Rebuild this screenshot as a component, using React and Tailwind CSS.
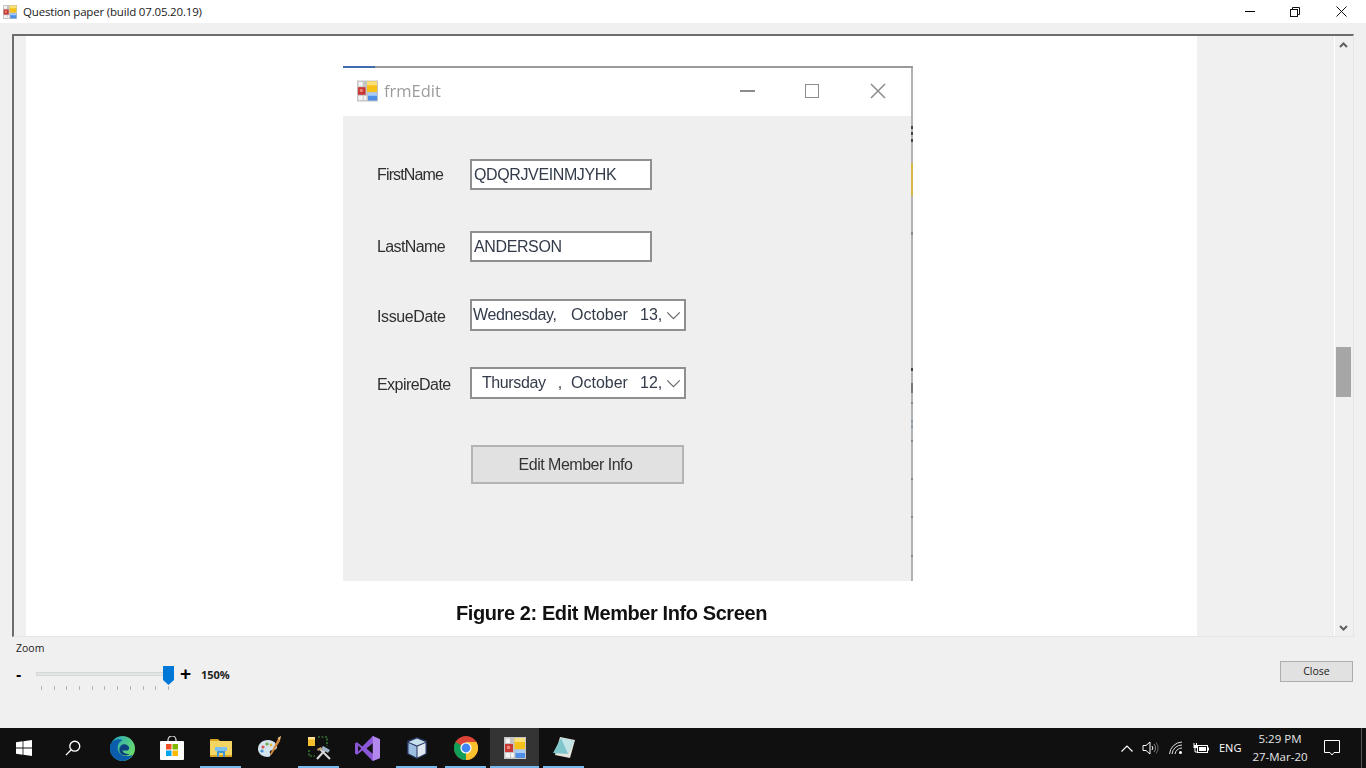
const AppIcon = ({ className }) => (
  <svg viewBox="0 0 22 22" className={className}>
    <rect x="0" y="0" width="22" height="22" fill="#c4c4c4" />
    <rect x="1.5" y="1.5" width="4.5" height="4.5" fill="#f4f4f4" />
    <rect x="1.5" y="16" width="4.5" height="4.5" fill="#f4f4f4" />
    <rect x="7" y="16" width="3" height="4.5" fill="#f4f4f4" />
    <rect x="1" y="7" width="8" height="8" fill="#c93a36" />
    <rect x="3" y="9" width="3" height="3" fill="#f08a7c" />
    <rect x="10.5" y="1" width="10.5" height="11" fill="#f6c21a" />
    <rect x="10.5" y="1" width="10.5" height="4" fill="#fbe07a" />
    <rect x="11.5" y="13" width="9.5" height="8" fill="#4f8fe8" />
    <rect x="11.5" y="13" width="9.5" height="3" fill="#a9cdf7" />
  </svg>
);

const Chevron = () => (
  <svg viewBox="0 0 16 10" className="w-[15px] h-[9px]" fill="none" stroke="#6a6a6a" strokeWidth="1.4">
    <path d="M1 1.5 L8 8.5 L15 1.5" />
  </svg>
);

const Row = ({ label, children, className, labelClass }) => (
  <div className={`flex items-center ${className}`}>
    <div className={`w-[93px] text-[16px] text-[#2f2f2f] ${labelClass}`}>{label}</div>
    {children}
  </div>
);

const TextBox = ({ value }) => (
  <div className="w-[182px] h-[31px] border-2 border-[#8f8f8f] bg-white pl-[2px] flex items-center text-[16px] tracking-[-0.38px] text-[#333b4a]">{value}</div>
);

const DateBox = ({ day, comma, num, pad }) => (
  <div className="w-[216px] h-[32px] border-2 border-[#8f8f8f] bg-white flex items-center text-[16px] text-[#333b4a]">
    <span className={`${pad} whitespace-pre w-[99px] tracking-[-0.4px]`}>{day}{comma}</span>
    <span className="w-[69px]">October</span>
    <span className="w-[24px]">{num},</span>
    <span className="ml-[2px]"><Chevron /></span>
  </div>
);

const EdgeMark = ({ y, h, c }) => (
  <div className="absolute right-0 w-[2px]" style={{ top: y, height: h, background: c }} />
);

const Edge = () => (
  <div className="flex flex-col w-[2px] bg-[#b2b2b2] relative">
    {[[58, 3, "#444"], [64, 3, "#444"], [71, 3, "#444"], [95, 33, "#d8b84a"], [164, 3, "#888"], [300, 3, "#444"], [315, 10, "#777"], [334, 2, "#888"], [352, 3, "#8a9aaa"], [357, 3, "#8a9aaa"], [372, 2, "#888"], [410, 2, "#888"], [448, 2, "#888"], [487, 2, "#888"]].map(([y, h, c], i) => (
      <EdgeMark key={i} y={y} h={h} c={c} />
    ))}
  </div>
);

const Form = () => (
  <div className="w-[570px] h-[515px] shrink-0 flex flex-col" >
    <div className="flex h-[2px] bg-[#9a9a9a]">
      <div className="w-[32px] bg-[#3f6cab]" />
    </div>
    <div className="flex flex-1">
      <div className="flex-1 flex flex-col blur-[0.55px]">
        <div className="h-[48px] bg-white flex items-center pl-[14px] pb-[2px]">
          <AppIcon className="w-[21px] h-[22px]" />
          <span className="ml-[6px] text-[16.5px] text-[#9c9c9c] font-['Open_Sans',sans-serif]">frmEdit</span>
          <div className="flex-1" />
          <div className="w-[15px] h-[2px] bg-[#8c8c8c] mr-[50px]" />
          <div className="w-[14px] h-[14px] border-[1.5px] border-[#8c8c8c] mr-[51px]" />
          <svg viewBox="0 0 16 16" className="w-[16px] h-[16px] mr-[25px]" stroke="#8c8c8c" strokeWidth="1.5"><path d="M1 1 L15 15 M15 1 L1 15" /></svg>
        </div>
        <div className="flex-1 bg-[#efefef] pl-[34px] pt-[43px] font-['Liberation_Sans',sans-serif]">
          <Row label="FirstName" labelClass="tracking-[-0.85px]"><TextBox value="QDQRJVEINMJYHK" /></Row>
          <Row label="LastName" className="mt-[41px]" labelClass="pt-[1px] tracking-[-0.6px]"><TextBox value="ANDERSON" /></Row>
          <Row label="IssueDate" className="mt-[37px]" labelClass="pt-[3px] tracking-[-0.4px]"><DateBox day="Wednesday" comma="," num="13" pad="pl-[1px]" /></Row>
          <Row label="ExpireDate" className="mt-[36px]" labelClass="pt-[3px] tracking-[-0.55px]"><DateBox day="Thursday" comma="   ," num="12" pad="pl-[10px]" /></Row>
          <div className="ml-[94px] mt-[46px] w-[213px] h-[39px] bg-[#e1e1e1] border-2 border-[#b4b4b4] flex items-center justify-center pr-[4px] text-[16px] tracking-[-0.5px] text-[#333]">Edit Member Info</div>
        </div>
      </div>
      <Edge />
    </div>
  </div>
);

const Start = () => (
  <svg viewBox="0 0 16 16" className="w-[16px] h-[16px] -ml-px" fill="#fff">
    <path d="M0 2.3 L6.6 1.3 V7.5 H0 Z M7.4 1.2 L16 0 V7.5 H7.4 Z M0 8.4 H6.6 V14.7 L0 13.7 Z M7.4 8.4 H16 V16 L7.4 14.8 Z" />
  </svg>
);
const Search = () => (
  <svg viewBox="0 0 18 18" className="w-[16px] h-[16px] -ml-[2px]" fill="none" stroke="#fff" strokeWidth="1.5">
    <circle cx="11" cy="7" r="5.6" /><path d="M7 11 L1 17" />
  </svg>
);
const Edge2 = () => (
  <svg viewBox="0 0 24 24" className="w-[25px] h-[25px]">
    <defs>
      <linearGradient id="eg" x1="0" y1="0" x2="1" y2="0.6"><stop offset="0" stopColor="#1ea5c9" /><stop offset="1" stopColor="#6bdb6a" /></linearGradient>
    </defs>
    <circle cx="12" cy="12" r="12" fill="url(#eg)" />
    <path d="M12 24 A12 12 0 0 1 1 7 C4 3 9 2.5 12 4 C7 6 6 12 9 16 C12 20 18 20 22 18 A12 12 0 0 1 12 24 Z" fill="#0b5cab" />
    <path d="M9 13 C9 9 13 7 16 8.5 C19 10 19 13 17 14 L12 14 C12 16 15 18 19 17 C16 20 9 19 9 13 Z" fill="#0e3f7e" />
  </svg>
);
const Store = () => (
  <svg viewBox="0 0 24 24" className="w-[24px] h-[24px]">
    <path d="M8 6 V4 A4 4 0 0 1 16 4 V6" fill="none" stroke="#ddd" strokeWidth="1.2" />
    <rect x="0" y="5" width="24" height="19" rx="1" fill="#fff" />
    <rect x="6" y="8" width="5.5" height="5.5" fill="#f25022" />
    <rect x="12.5" y="8" width="5.5" height="5.5" fill="#7fba00" />
    <rect x="6" y="14.5" width="5.5" height="5.5" fill="#00a4ef" />
    <rect x="12.5" y="14.5" width="5.5" height="5.5" fill="#ffb900" />
  </svg>
);
const Folder = () => (
  <svg viewBox="0 0 22 20" className="w-[22px] h-[20px]">
    <path d="M0 2 A1 1 0 0 1 1 1 H8 L10 3 H0 Z" fill="#d9a520" />
    <rect x="0" y="3" width="22" height="16" fill="#f4d463" />
    <rect x="0" y="17" width="22" height="2" fill="#d9a520" />
    <path d="M7 19 V13 A1 1 0 0 1 8 12 H14 A1 1 0 0 1 15 13 V19 H13 V15 H9 V19 Z" fill="#3f95d6" />
    <rect x="5" y="9" width="12" height="4" fill="#7cc0ee" />
  </svg>
);
const Palette = () => (
  <svg viewBox="0 0 24 24" className="w-[24px] h-[24px]">
    <path d="M10 4 C4 4 0 8 0 13 C0 18 5 21 10 21 C13 21 13 18 12 17 C11 15 13 14 15 14 C19 14 20 11 18 8 C16 5 13 4 10 4 Z" fill="#d4e4ee" />
    <circle cx="5" cy="11" r="1.6" fill="#d9534f" /><circle cx="9" cy="8" r="1.6" fill="#6bb04a" /><circle cx="13" cy="9" r="1.4" fill="#e3b53a" /><circle cx="4" cy="15" r="1.6" fill="#4b8fd6" />
    <path d="M23 0 L20 3 L12 18 L13.5 19 L22 5 Z" fill="#d18a3c" /><path d="M23 0 L19.5 2 L21.5 4 Z" fill="#e8c98f" />
  </svg>
);
const Tools = () => (
  <svg viewBox="0 0 24 24" className="w-[24px] h-[24px]">
    <path d="M11 1 H20 V10 M2 14 V20 H8" fill="none" stroke="#3f9a3f" strokeWidth="1.2" strokeDasharray="2 1.5" />
    <rect x="1" y="1" width="7" height="9" fill="#f5bd2a" /><rect x="1" y="1" width="7" height="2.5" fill="#fce28a" />
    <path d="M10 23 L19 13 M13 13 L23 23" stroke="#d9d9d9" strokeWidth="2" />
    <path d="M16 10 L23 14 L21 17 L14 13 Z" fill="#9fb4c6" /><path d="M10 13 L14 11 L15 13 L11 15 Z" fill="#c9a063" />
  </svg>
);
const VS = () => (
  <svg viewBox="0 0 24 24" className="w-[25px] h-[25px]">
    <path d="M17 0 L24 3 V21 L17 24 L7 14 L2 18 L0 17 V7 L2 6 L7 10 Z" fill="#8a57d6" />
    <path d="M17 0 L24 3 V21 L17 24 Z" fill="#b388ee" />
    <path d="M17 7 L11 12 L17 17 Z M3 9 V15 L6 12 Z" fill="#111" />
  </svg>
);
const Cube = () => (
  <svg viewBox="0 0 24 24" className="w-[24px] h-[24px]">
    <path d="M12 1 L22 5 V18 L12 23 L2 18 V5 Z" fill="#26335e" />
    <path d="M12 2.5 L20.5 6 L12 9.5 L3.5 6 Z" fill="#c6e0ec" />
    <path d="M3.5 7 L11.5 10.5 V21.5 L3.5 17.5 Z" fill="#9cbfe0" />
    <path d="M20.5 7 L12.5 10.5 V21.5 L20.5 17.5 Z" fill="#dfe8ee" />
  </svg>
);
const Chrome = () => (
  <svg viewBox="0 0 24 24" className="w-[24px] h-[24px]">
    <circle cx="12" cy="12" r="12" fill="#db4437" />
    <path d="M12 12 L1.6 6 A12 12 0 0 0 12 24 L18 13.5 Z" fill="#0f9d58" />
    <path d="M12 24 A12 12 0 0 0 22.4 6 H12 L12 12 Z" fill="#fbc02d" />
    <path d="M12 12 L6 6 H12 Z" fill="#db4437" />
    <circle cx="12" cy="12" r="5.6" fill="#fff" /><circle cx="12" cy="12" r="4.4" fill="#4285f4" />
  </svg>
);
const Notes = () => (
  <svg viewBox="0 0 24 24" className="w-[24px] h-[24px]">
    <path d="M8 1 L23 4 L18 22 L3 19 Z" fill="#e6e6dc" />
    <path d="M9 2 L22 5 L16 18 L1 17 Z" fill="#7fc5cc" />
    <path d="M9 2 L22 5 L16 18 Z" fill="#c2e4e6" />
  </svg>
);

const tasks = [
  [<Start />, 0], [<Search />, 0], [<Edge2 />, 0], [<Store />, 0], [<Folder />, 1], [<Palette />, 0],
  [<Tools />, 1], [<VS />, 0], [<Cube />, 1], [<Chrome />, 1], [<AppIcon className="w-[22px] h-[22px]" />, 2], [<Notes />, 1],
];

const Tray = () => (
  <div className="flex items-center text-white font-['Open_Sans',sans-serif] pr-[4px]">
    <svg viewBox="0 0 12 7" className="w-[12px] h-[7px] mr-[9px]" fill="none" stroke="#fff" strokeWidth="1.2"><path d="M0.5 6.5 L6 1 L11.5 6.5" /></svg>
    <svg viewBox="0 0 17 14" className="w-[17px] h-[14px] mr-[10px]" fill="none" stroke="#fff" strokeWidth="1"><path d="M1 4.5 H4 L8 1 V13 L4 9.5 H1 Z" /><path d="M10 5 A3 3 0 0 1 10 9" /><path d="M12 3 A6 6 0 0 1 12 11" stroke="#888" /><path d="M14 1.5 A9 9 0 0 1 14 12.5" stroke="#666" /></svg>
    <svg viewBox="0 0 14 14" className="w-[14px] h-[14px] mr-[10px]" fill="none" stroke="#ddd" strokeWidth="1"><path d="M0.5 13 A13 13 0 0 1 13 1" /><path d="M3 13 A10 10 0 0 1 13 4" /><path d="M6 13 A7 7 0 0 1 13 7" /><circle cx="11.5" cy="11.5" r="1.5" fill="#fff" stroke="none" /></svg>
    <svg viewBox="0 0 16 11" className="w-[16px] h-[11px] mr-[10px]" fill="none" stroke="#fff" strokeWidth="1"><rect x="4.5" y="2.5" width="10" height="7" /><rect x="6" y="4" width="7" height="4" fill="#fff" stroke="none" /><path d="M15.5 4.5 V7.5" /><path d="M1 0 V2 M3.5 0 V2" /><rect x="0.5" y="2" width="3.5" height="3" fill="#fff" stroke="none" /><path d="M2 5 V9 H4" /></svg>
    <span className="w-[27px] text-[11px] mr-[6px]">ENG</span>
    <div className="w-[56px] flex flex-col items-center text-[11.5px] leading-[18px]">
      <span className="text-[#e6e6e6]">5:29 PM</span>
      <span className="text-[#e6e6e6] whitespace-nowrap">27-Mar-20</span>
    </div>
    <svg viewBox="0 0 16 16" className="w-[16px] h-[16px] ml-[16px]" fill="none" stroke="#fff" strokeWidth="1"><path d="M0.5 0.5 H15.5 V12.5 H10 L8 15 L6 12.5 H0.5 Z" /></svg>
    <div className="w-px h-[40px] bg-[#555] ml-[21px]" />
  </div>
);

const ticks = Array.from({ length: 11 });

export default function App() {
  return (
    <div className="w-[1366px] h-[768px] bg-[#f0f0f0] flex flex-col overflow-hidden font-['Open_Sans',sans-serif]">
      <div className="h-[23px] bg-white flex items-center shrink-0">
        <AppIcon className="ml-[3px] w-[14px] h-[14px]" />
        <span className="ml-[6px] text-[11.5px] tracking-[-0.18px] text-[#1a1a1a] whitespace-nowrap">Question paper (build 07.05.20.19)</span>
        <div className="flex-1" />
        <div className="w-[10px] h-px bg-black mr-[35px]" />
        <svg viewBox="0 0 10 10" className="w-[10px] h-[10px] mr-[36px]" fill="none" stroke="#111"><path d="M2.5 2.5 V0.5 H9.5 V7.5 H7.5" /><rect x="0.5" y="2.5" width="7" height="7" /></svg>
        <svg viewBox="0 0 11 11" className="w-[11px] h-[11px] mr-[19px]" stroke="#111"><path d="M0.5 0.5 L10.5 10.5 M10.5 0.5 L0.5 10.5" /></svg>
      </div>
      <div className="pt-[11px] pl-[12px] shrink-0">
        <div className="w-[1342px] h-[603px] border-t-2 border-l-2 border-r border-b border-t-[#6d6d6d] border-l-[#6d6d6d] border-r-[#e4e4e4] border-b-[#e4e4e4] flex">
          <div className="w-[12px] shrink-0" />
          <div className="w-[1171px] shrink-0 bg-white pl-[317px] pt-[30px] flex flex-col">
            <Form />
            <div className="mt-[21px] pl-[113px] text-[20px] font-bold leading-[22px] tracking-[-0.41px] text-[#111] font-['Liberation_Sans',sans-serif] blur-[0.25px] whitespace-nowrap">Figure 2: Edit Member Info Screen</div>
          </div>
          <div className="w-[138px] shrink-0 border-r border-r-white" />
          <div className="w-[17px] shrink-0 flex flex-col items-center relative">
            <svg viewBox="0 0 9 6" className="w-[9px] h-[6px] mt-[6px] mb-[299px]" fill="none" stroke="#606060" strokeWidth="2"><path d="M1 5 L4.5 1.5 L8 5" /></svg>
            <div className="w-[15px] h-[50px] bg-[#a6a6a6] self-start ml-px" />
            <div className="flex-1" />
            <svg viewBox="0 0 9 6" className="w-[9px] h-[6px] mb-[5px]" fill="none" stroke="#606060" strokeWidth="2"><path d="M1 1 L4.5 4.5 L8 1" /></svg>
          </div>
        </div>
      </div>
      <div className="flex-1 flex justify-between">
        <div className="pl-[16px] pt-[4px]">
          <div className="text-[10.5px] leading-[15px] text-[#222]">Zoom</div>
          <div className="flex mt-[10px] h-[30px]">
            <span className="w-[20px] text-[16px] font-bold leading-[18px] text-black font-['Liberation_Sans',sans-serif]">-</span>
            <div className="w-[140px] relative">
              <div className="h-[4px] w-[132px] mt-[6px] bg-[#e3e6e6] border border-[#d4d8d8]" />
              <div className="flex justify-between w-[128px] ml-[5px] mt-[10px]">
                {ticks.map((_, i) => <div key={i} className="w-px h-[4px] bg-[#b5b5b5]" />)}
              </div>
              <svg viewBox="0 0 11 19" className="absolute left-[127px] top-0 w-[11px] h-[19px]"><path d="M0 0 H11 V14 L5.5 19 L0 14 Z" fill="#0078d7" /></svg>
            </div>
            <span className="w-[27px] -mt-[2px] pl-[5px] text-[19px] font-bold leading-[20px] text-black font-['Liberation_Sans',sans-serif] -ml-[1px]">+</span>
            <span className="text-[11px] font-bold leading-[18px] text-[#222] ml-[-1px]">150%</span>
          </div>
        </div>
        <div className="pt-[24px] pr-[13px]">
          <div className="w-[73px] h-[21px] bg-[#e1e1e1] border border-[#adadad] flex items-center justify-center text-[10.5px] text-[#1a1a1a]">Close</div>
        </div>
      </div>
      <div className="h-[40px] bg-[#101010] shrink-0 flex justify-between">
        <div className="flex">
          {tasks.map(([icon, state], i) => (
            <div key={i} className={`w-[49px] h-[40px] flex items-center justify-center relative ${state === 2 ? "bg-[#343434]" : ""}`}>
              {icon}
              {state > 0 && <div className={`absolute bottom-0 h-[2px] bg-[#76b9ed] ${state === 2 ? "inset-x-0" : "inset-x-[4px]"}`} />}
            </div>
          ))}
        </div>
        <Tray />
      </div>
    </div>
  );
}
